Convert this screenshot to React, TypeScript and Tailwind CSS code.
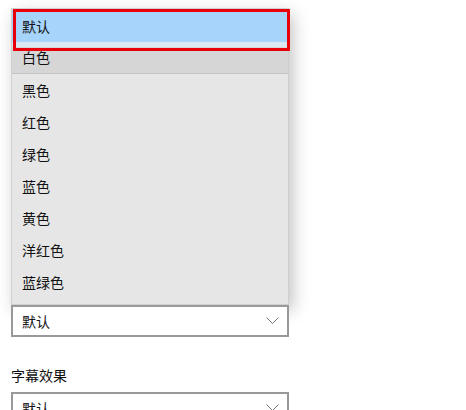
const options = ["默认", "白色", "黑色", "红色", "绿色", "蓝色", "黄色", "洋红色", "蓝绿色"];

const font = { fontFamily: '"Noto Sans CJK SC", "Noto Sans", sans-serif' };

function Chevron() {
  return (
    <svg width="13" height="8" viewBox="0 0 13 8" fill="none">
      <polyline points="0.5,0.5 6.5,6.5 12.5,0.5" stroke="#777" strokeWidth="1" />
    </svg>
  );
}

function ComboBox({ value }: { value: string }) {
  return (
    <div className="flex h-8 w-[278px] items-center justify-between border-2 border-[#999999] bg-white pl-[9px] pr-[8px] text-[14px] text-[#111]">
      <span>{value}</span>
      <Chevron />
    </div>
  );
}

export default function App() {
  return (
    <div
      className="relative h-[410px] w-[466px] overflow-hidden bg-white pl-[11px] pt-[8px]"
      style={font}
    >
      {/* open dropdown list */}
      <div className="h-[297px] w-[278px] border border-[#cfcfcf] bg-[#e6e6e6] pt-[1px] shadow-[4px_6px_16px_rgba(0,0,0,0.24)]">
        {options.map((opt, i) => (
          <div
            key={opt}
            className={[
              "flex h-8 items-center pl-[10px] text-[14px] text-[#111]",
              i === 0 ? "bg-[#a6d4fa]" : "",
              i === 1 ? "border-b border-[#c4c4c4] bg-[linear-gradient(#dce8f1_0,#dce8f1_5px,#d6d6d6_5px)]" : "",
            ].join(" ")}
          >
            {opt}
          </div>
        ))}
      </div>

      <ComboBox value="默认" />

      <div className="mt-[28px] h-5 text-[14px] leading-5 text-[#111]">字幕效果</div>
      <div className="mt-[7px]">
        <ComboBox value="默认" />
      </div>

      {/* highlight annotation */}
      <div className="absolute left-[13px] top-[9px] h-[42px] w-[277px] border-[3px] border-[#e8000b]" />
    </div>
  );
}
